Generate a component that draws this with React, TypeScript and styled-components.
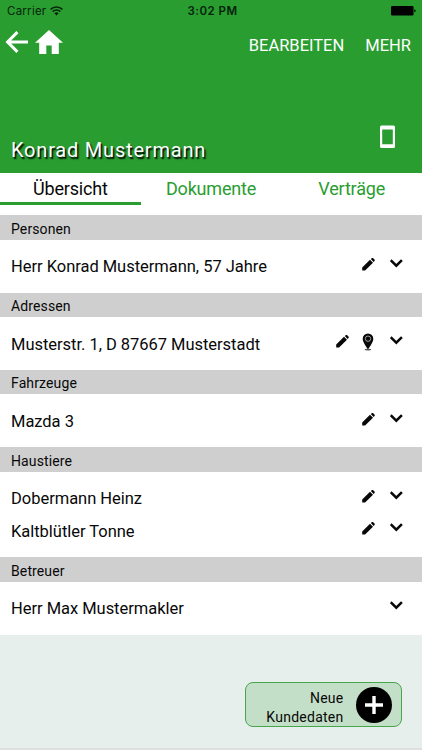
import React from "react";
import styled, { createGlobalStyle } from "styled-components";

const GlobalStyle = createGlobalStyle`
  * { box-sizing: border-box; }
  body { margin: 0; }
`;

const Screen = styled.div`
  width: 422px;
  height: 750px;
  display: flex;
  flex-direction: column;
  overflow: hidden;
  background: #e7efec;
  color: #080808;
  font-family: Roboto, "Liberation Sans", sans-serif;
  border-bottom: 2px solid #dfdfdf;
`;

const Header = styled.header`
  height: 173px;
  flex: none;
  display: flex;
  flex-direction: column;
  background: #299d30;
`;

const StatusBar = styled.div`
  height: 22px;
  display: grid;
  grid-template-columns: 1fr auto 1fr;
  align-items: center;
  padding: 0 6px 0 7px;
  color: #06240a;
  font-family: Inter, "Liberation Sans", sans-serif;
  font-size: 11.5px;
`;

const Carrier = styled.div`
  display: flex;
  align-items: center;
  gap: 4px;
  letter-spacing: 0.25px;
`;

const Clock = styled.div`
  padding-left: 2px;
  font-weight: 600;
  letter-spacing: 0.5px;
`;

const BatterySlot = styled.div`
  display: flex;
  justify-content: flex-end;
`;

const Toolbar = styled.nav`
  height: 46px;
  display: flex;
  align-items: center;
  padding: 0 11px 0 5px;
  color: #fff;
`;

const NavIcons = styled.div`
  flex: 1;
  display: flex;
  align-items: center;
  gap: 7px;
  padding-bottom: 7px;
`;

const ToolbarAction = styled.button`
  border: 0;
  padding: 2px 0 0;
  margin-left: 21px;
  background: none;
  color: #fff;
  font: 16.5px/20px Roboto, sans-serif;
`;

const TitleRow = styled.div`
  flex: 1;
  display: flex;
  align-items: flex-end;
  justify-content: space-between;
  padding: 0 27.5px 11px 11px;
`;

const Title = styled.h1`
  margin: 0;
  color: #fff;
  font-size: 20px;
  line-height: 24px;
  font-weight: 400;
  letter-spacing: 0.8px;
  text-shadow: 1.5px 1.5px 1.5px #000;
`;

const PhoneSlot = styled.div`
  display: flex;
  padding-bottom: 13px;
`;

const Tabs = styled.div`
  height: 42.2px;
  flex: none;
  display: grid;
  grid-template-columns: repeat(3, 1fr);
  align-items: start;
  background: #fff;
`;

const Tab = styled.button<{ $active?: boolean }>`
  height: 32px;
  border: 0;
  border-bottom: 3px solid ${(p) => (p.$active ? "#299d30" : "transparent")};
  padding: 3px 0 0;
  background: none;
  color: ${(p) => (p.$active ? "#080808" : "#299d30")};
  font: 18px/24px Roboto, sans-serif;
  letter-spacing: -0.2px;
`;

const SectionTitle = styled.h2`
  height: 24.5px;
  margin: 0;
  padding: 2.5px 11px 0;
  background: #cfcfcf;
  font-size: 14px;
  line-height: 23px;
  font-weight: 400;
  letter-spacing: 0.12px;
`;

const SectionBody = styled.div`
  padding: 10.25px 18.5px 10.25px 11px;
  background: #fff;
`;

const Row = styled.div`
  height: 32.4px;
  display: flex;
  align-items: center;
`;

const RowText = styled.span`
  flex: 1;
  font-size: 16.5px;
  line-height: 24px;
  padding-top: 2px;
  letter-spacing: -0.03px;
`;

const RowIcons = styled.span`
  display: flex;
  align-items: center;
  gap: 14.5px;
  padding-bottom: 3.6px;
`;

const PinSvg = styled.svg`
  margin: 1px 1px 0 -1.5px;
`;

const Footer = styled.footer`
  flex: 1;
  display: flex;
  justify-content: flex-end;
  align-items: flex-start;
  padding: 47.8px 20.5px 0 0;
`;

const AddButton = styled.button`
  width: 157px;
  height: 45px;
  display: flex;
  align-items: center;
  justify-content: flex-end;
  gap: 12px;
  border: 1px solid #46a64c;
  border-radius: 8px;
  padding: 0 9px 0 0;
  background: #c3dfc7;
  color: #080808;
  text-align: right;
`;

const AddLabel = styled.span`
  padding-top: 6px;
  font: 14px/19px Roboto, sans-serif;
  letter-spacing: 0.25px;
`;

const WifiIcon = () => (
  <svg width="13" height="10" viewBox="0 0 13 10" fill="none" stroke="currentColor" strokeWidth="1.5">
    <path d="M.6 3.4a8.4 8.4 0 0 1 11.8 0M2.7 5.6a5.4 5.4 0 0 1 7.6 0" />
    <path d="M4.4 7.3a3 3 0 0 1 4.2 0L6.5 9.5z" fill="currentColor" stroke="none" />
  </svg>
);

const BatteryIcon = () => (
  <svg width="25" height="10" viewBox="0 0 25 10">
    <rect width="22.5" height="9.5" rx="1.2" fill="#000" />
    <path d="M23.3 3.2c1.8.5 1.8 2.7 0 3.2z" fill="#000" />
  </svg>
);

const BackIcon = () => (
  <svg width="23" height="24" viewBox="0 0 23 24" fill="none" stroke="#fff" strokeWidth="3">
    <path d="M12.4 2.1 2.6 12l9.8 9.9M3 12h20" />
  </svg>
);

const HomeIcon = () => (
  <svg width="28" height="24" viewBox="0 0 28 24" fill="#fff">
    <path d="M14 0 28 12.7h-4.2V24h-7.1v-8.5h-5.4V24H4.2V12.7H0z" />
  </svg>
);

const PhoneIcon = () => (
  <svg width="15" height="24" viewBox="0 0 15 24">
    <path fillRule="evenodd" fill="#fff" d="M1.5.5h12Q15 .5 15 2v19.5q0 1.5-1.5 1.5h-12Q0 23 0 21.5V2Q0 .5 1.5.5zM2.2 4.5v14.7h10.6V4.5z" />
  </svg>
);

const PencilIcon = () => (
  <svg width="13" height="13" viewBox="0 0 13 13" fill="#080808">
    <path d="M.2 9.5 8 1.8l3 2.9-7.9 7.8H.2zM8.8 1.1l.9-.8c.5-.4 1-.4 1.5 0l1.3 1.2c.4.5.4 1 0 1.5l-.9.9z" />
  </svg>
);

const PinIcon = () => (
  <PinSvg width="12" height="18" viewBox="0 0 12 18">
    <ellipse cx="6" cy="16.6" rx="3.3" ry=".9" fill="#555" />
    <path d="M6 .5a5.3 5.3 0 0 1 5.3 5.4C11.3 9.3 6 16.3 6 16.3S.7 9.3.7 5.9A5.3 5.3 0 0 1 6 .5z" fill="#080808" />
    <circle cx="6" cy="5.7" r="2.7" fill="none" stroke="#aaa" strokeWidth=".9" />
  </PinSvg>
);

const ChevronIcon = () => (
  <svg width="14" height="11" viewBox="0 0 14 11" fill="none" stroke="#080808" strokeWidth="2.5">
    <path d="M.7 1.2 6.3 6.7l5.6-5.5" />
  </svg>
);

const PlusIcon = () => (
  <svg width="36" height="36" viewBox="0 0 36 36">
    <circle cx="18" cy="18" r="18" fill="#000" />
    <path d="M18 9v18M9 18h18" stroke="#fff" strokeWidth="3.4" />
  </svg>
);

type Entry = { text: string; edit?: boolean; map?: boolean };

const sections: { title: string; entries: Entry[] }[] = [
  { title: "Personen", entries: [{ text: "Herr Konrad Mustermann, 57 Jahre", edit: true }] },
  { title: "Adressen", entries: [{ text: "Musterstr. 1, D 87667 Musterstadt", edit: true, map: true }] },
  { title: "Fahrzeuge", entries: [{ text: "Mazda 3", edit: true }] },
  {
    title: "Haustiere",
    entries: [
      { text: "Dobermann Heinz", edit: true },
      { text: "Kaltblütler Tonne", edit: true },
    ],
  },
  { title: "Betreuer", entries: [{ text: "Herr Max Mustermakler" }] },
];

export default function App() {
  return (
    <>
      <GlobalStyle />
      <Screen>
        <Header>
          <StatusBar>
            <Carrier>
              Carrier
              <WifiIcon />
            </Carrier>
            <Clock>3:02 PM</Clock>
            <BatterySlot>
              <BatteryIcon />
            </BatterySlot>
          </StatusBar>
          <Toolbar>
            <NavIcons>
              <BackIcon />
              <HomeIcon />
            </NavIcons>
            <ToolbarAction>BEARBEITEN</ToolbarAction>
            <ToolbarAction>MEHR</ToolbarAction>
          </Toolbar>
          <TitleRow>
            <Title>Konrad Mustermann</Title>
            <PhoneSlot>
              <PhoneIcon />
            </PhoneSlot>
          </TitleRow>
        </Header>
        <Tabs>
          <Tab $active>Übersicht</Tab>
          <Tab>Dokumente</Tab>
          <Tab>Verträge</Tab>
        </Tabs>
        {sections.map((section) => (
          <section key={section.title}>
            <SectionTitle>{section.title}</SectionTitle>
            <SectionBody>
              {section.entries.map((entry) => (
                <Row key={entry.text}>
                  <RowText>{entry.text}</RowText>
                  <RowIcons>
                    {entry.edit && <PencilIcon />}
                    {entry.map && <PinIcon />}
                    <ChevronIcon />
                  </RowIcons>
                </Row>
              ))}
            </SectionBody>
          </section>
        ))}
        <Footer>
          <AddButton>
            <AddLabel>
              Neue
              <br />
              Kundedaten
            </AddLabel>
            <PlusIcon />
          </AddButton>
        </Footer>
      </Screen>
    </>
  );
}
